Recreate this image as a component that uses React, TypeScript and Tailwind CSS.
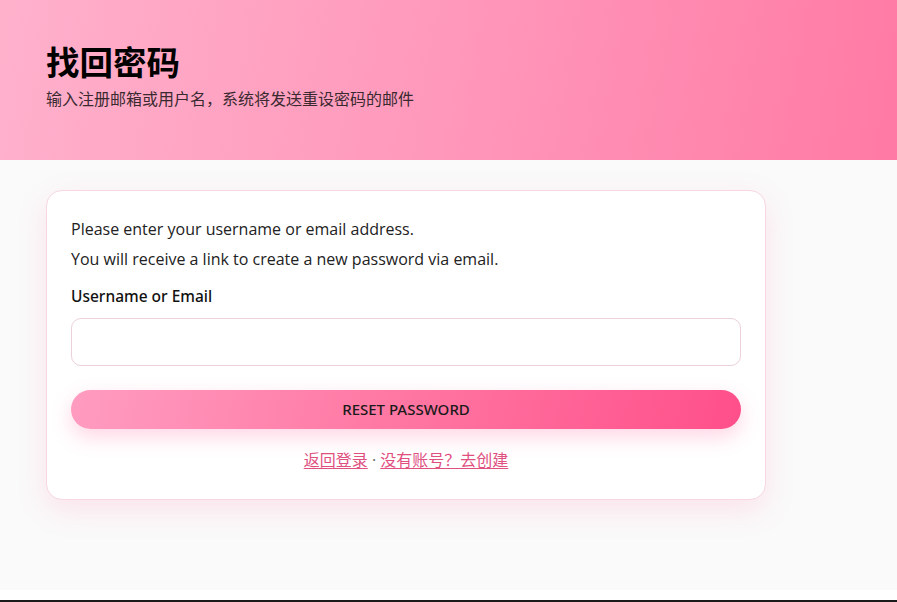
import { useState } from "react";

const SANS = "font-['Open_Sans','Noto_Sans_CJK_SC',sans-serif]";
const CJK = "font-['Noto_Sans_CJK_SC',sans-serif]";
const MEDIUM = "font-['Noto_Sans','Open_Sans',sans-serif] font-medium";

export default function App() {
  const [login, setLogin] = useState("");

  return (
    <div className={`flex h-[602px] flex-col ${SANS}`}>
      <header className="h-[160px] shrink-0 bg-[linear-gradient(100deg,#ffb1cc_0%,#ff98bb_50%,#ff7aa4_100%)] px-[46px] pt-[39px]">
        <h1 className={`${CJK} text-[33.5px] leading-[44px] font-bold text-black`}>找回密码</h1>
        <p className={`mt-[4px] ${CJK} text-[16px] leading-[22px] text-[#3a2a30]`}>输入注册邮箱或用户名，系统将发送重设密码的邮件</p>
      </header>

      <main className="h-[430px] shrink-0 bg-[#fafafa] px-[46px] pt-[30px]">
        <div className="w-[720px] rounded-[16px] border border-[#f6d7e2] bg-white px-[24px] pt-[23px] pb-[28px] shadow-[0_10px_30px_rgba(255,105,160,0.16)]">
          <p className="text-[16px] leading-[30px] text-[#222]">Please enter your username or email address.</p>
          <p className="text-[16px] leading-[30px] text-[#222]">You will receive a link to create a new password via email.</p>

          <label className="mt-[11px] block">
            <span className={`block ${MEDIUM} text-[15.5px] leading-[22px] text-[#111]`}>Username or Email</span>
            <input
              value={login}
              onChange={(event) => setLogin(event.target.value)}
              className="mt-[11px] block h-[48px] w-full rounded-[10px] border border-[#ecd0dc] bg-white px-3 text-[16px] outline-none"
            />
          </label>

          <button className={`mt-[24px] block h-[39px] w-full rounded-full bg-[linear-gradient(100deg,#ff9cc0_0%,#ff76a2_50%,#ff4f8a_100%)] ${MEDIUM} text-[15px] text-[#1a1a1a] shadow-[0_8px_20px_rgba(255,90,150,0.25)]`}>
            RESET PASSWORD
          </button>

          <p className="mt-[19px] text-center text-[16px] leading-[22px] text-[#666]">
            <a href="#" className={`${CJK} text-[#e0507f] underline underline-offset-2`}>返回登录</a>
            {" · "}
            <a href="#" className={`${CJK} text-[#e0507f] underline underline-offset-2`}>没有账号？去创建</a>
          </p>
        </div>
      </main>

      <div className="h-[10px] shrink-0 bg-white" />
      <div className="h-[2px] shrink-0 bg-[#1a1a1a]" />
    </div>
  );
}
